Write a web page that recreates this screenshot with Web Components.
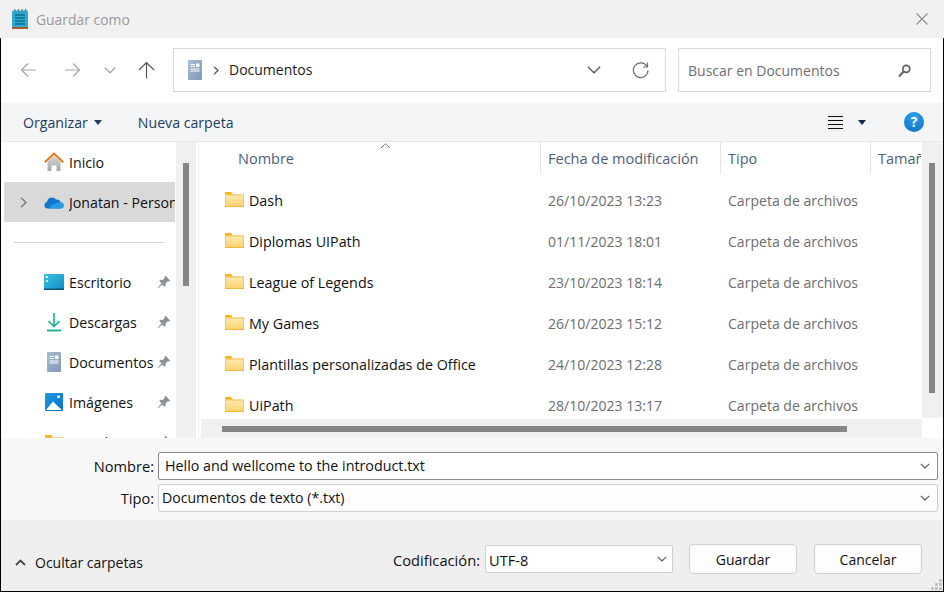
<!DOCTYPE html>
<html lang="es">
<head>
<meta charset="utf-8">
<title>Guardar como</title>
<style>
  html, body { margin: 0; height: 100%; background: #f0f0f0; }
  body { font: 14px/20px "Open Sans", "Noto Sans", sans-serif; color: #111; overflow: hidden; }
</style>
</head>
<body>
<fd-dialog>
  <fd-titlebar slot="title">Guardar como</fd-titlebar>
  <fd-navbar slot="nav"></fd-navbar>
  <fd-toolbar slot="tools"></fd-toolbar>
  <fd-sidebar slot="side">
    <fd-side-item icon="home" label="Inicio"></fd-side-item>
    <fd-side-item icon="cloud" label="Jonatan - Personal" selected></fd-side-item>
    <fd-side-sep></fd-side-sep>
    <fd-side-item icon="desktop" label="Escritorio" pinned></fd-side-item>
    <fd-side-item icon="download" label="Descargas" pinned></fd-side-item>
    <fd-side-item icon="doc" label="Documentos" pinned></fd-side-item>
    <fd-side-item icon="image" label="Imágenes" pinned></fd-side-item>
    <fd-side-item icon="folder" label="UiPath" pinned></fd-side-item>
  </fd-sidebar>
  <fd-filelist slot="files">
    <fd-file name="Dash" date="26/10/2023 13:23"></fd-file>
    <fd-file name="Diplomas UIPath" date="01/11/2023 18:01"></fd-file>
    <fd-file name="League of Legends" date="23/10/2023 18:14"></fd-file>
    <fd-file name="My Games" date="26/10/2023 15:12"></fd-file>
    <fd-file name="Plantillas personalizadas de Office" date="24/10/2023 12:28"></fd-file>
    <fd-file name="UiPath" date="28/10/2023 13:17"></fd-file>
  </fd-filelist>
  <fd-saveform slot="form"></fd-saveform>
  <fd-footer slot="footer"></fd-footer>
</fd-dialog>

<script>
const ICONS = {
  notepad: `<svg width="16" height="20" viewBox="0 0 16 20"><rect y="1.500" width="16" height="17" rx="1" fill="#2fa9cf"/><rect y="18" width="16" height="2" fill="#a8592a"/><path d="M3 0v3M6.500 0v3M10 0v3M13.500 0v3" stroke="#5f7f8c" stroke-width="1.200"/><path d="M3 6h10M3 9h10M3 12h10M3 15h10" stroke="#0d6e8e" stroke-width="1.300"/></svg>`,
  home: `<svg width="20" height="20" viewBox="0 0 20 20"><defs><linearGradient id="h" x1="0" y1="0" x2="0" y2="1"><stop offset="0" stop-color="#d8d8d8"/><stop offset="1" stop-color="#a6a6a6"/></linearGradient></defs><path d="M3.500 9.500L10 3.500l6.500 6V19H12.500v-5.500h-5V19H3.500z" fill="url(#h)"/><path d="M0.800 10.200L10 1.600l9.200 8.600" fill="none" stroke="#e8740c" stroke-width="1.900"/></svg>`,
  cloud: `<svg width="20" height="14" viewBox="0 0 20 14"><path d="M3.400 13.500A3.300 3.300 0 0 1 3 7a5 5 0 0 1 9-2.400A4 4 0 0 1 16.600 7.500 3 3 0 0 1 16.500 13.500z" fill="#1276cf"/><path d="M5 13.500H16.700a3 3 0 0 0 .1-6c-2.500-.6-4.500.2-5.600 2-2-.7-4.800.5-6.200 4z" fill="#2b9be6"/></svg>`,
  desktop: `<svg width="20" height="16" viewBox="0 0 20 16"><defs><linearGradient id="d" x1="0" y1="0" x2="1" y2="1"><stop offset="0" stop-color="#3cc4dc"/><stop offset="1" stop-color="#0f8cc8"/></linearGradient></defs><rect y="0" width="20" height="15.500" rx=".8" fill="url(#d)"/><rect y="14.500" width="20" height="1.500" fill="#0d5a78"/><rect x="2" y="2" width="2" height="2" fill="#fff"/><rect x="2" y="6" width="2" height="2" fill="#dff"/></svg>`,
  download: `<svg width="14" height="20" viewBox="0 0 14 20"><path d="M7 1v13.500M1.500 9L7 14.500 12.500 9" fill="none" stroke="#1fb598" stroke-width="1.700"/><path d="M0 18.500h14" stroke="#1fb598" stroke-width="1.800"/></svg>`,
  doc: `<svg width="14" height="20" viewBox="0 0 14 20"><defs><linearGradient id="dc" x1="0" y1="0" x2="1" y2="1"><stop offset="0" stop-color="#a8bcd4"/><stop offset="1" stop-color="#7e98b6"/></linearGradient></defs><rect width="14" height="20" rx="1" fill="url(#dc)"/><path d="M2.500 4.500h4.500M2.500 6.500h4.500M2.500 9h9M2.500 11h9" stroke="#fff" stroke-width="1"/><rect x="8" y="3.500" width="3.500" height="3.500" fill="#fff"/></svg>`,
  image: `<svg width="18" height="18" viewBox="0 0 18 18"><defs><linearGradient id="i" x1="0" y1="0" x2="1" y2="1"><stop offset="0" stop-color="#1b9be3"/><stop offset="1" stop-color="#0a70c8"/></linearGradient></defs><rect width="18" height="18" rx="1" fill="url(#i)"/><circle cx="13.500" cy="3.800" r="1.500" fill="#fff"/><path d="M1 17L8 8.500 11 11.500 17 17z" fill="#fff"/></svg>`,
  folder: `<svg width="19" height="15" viewBox="0 0 19 15"><defs><linearGradient id="f" x1="0" y1="0" x2="0" y2="1"><stop offset="0" stop-color="#ffeab0"/><stop offset="1" stop-color="#fdd26e"/></linearGradient></defs><path d="M0 1a1 1 0 0 1 1-1h5l2 2.500H0z" fill="#f7b216"/><rect y="2.500" width="19" height="12.500" rx=".6" fill="#f2b02e"/><rect x=".6" y="3.400" width="17.800" height="10.800" fill="url(#f)"/></svg>`,
  pin: `<svg width="14" height="14" viewBox="0 0 14 14"><path d="M8.500 .8l4.700 4.700-1.400 1-1-.3-2.300 2.300.1 2.200-1.200 1.100-2.300-2.400L1.500 13 .9 12.400 4.500 8.200 2.200 5.900 3.300 4.800l2.200.1 2.300-2.300-.3-1z" fill="#8b9298"/></svg>`
};

function define(tag, css, html) {
  customElements.define(tag, class extends HTMLElement {
    constructor() {
      super();
      this.attachShadow({ mode: 'open' });
    }
    connectedCallback() {
      const body = typeof html === 'function' ? html(this) : html;
      this.shadowRoot.innerHTML = `<style>${css}</style>${body}`;
    }
  });
}

const chevron = (w, h, color) => `<svg width="${w}" height="${h}" viewBox="0 0 ${w} ${h}"><path d="M.8 .8L${w / 2} ${h - 1}L${w - .8} .8" fill="none" stroke="${color}" stroke-width="1.100"/></svg>`;

define('fd-dialog', `
  :host { display: flex; flex-direction: column; width: 944px; height: 592px; box-sizing: border-box; }
  .frame { flex: 1; min-height: 0; display: flex; flex-direction: column; border: solid #000; border-width: 0 1px 1px 1px; }
  .body { height: 296px; display: flex; background: #fff; overflow: hidden; }
`, `
  <slot name="title"></slot>
  <div class="frame">
    <slot name="nav"></slot>
    <slot name="tools"></slot>
    <div class="body"><slot name="side"></slot><slot name="files"></slot></div>
    <slot name="form"></slot>
    <slot name="footer"></slot>
  </div>
`);

define('fd-titlebar', `
  :host { display: flex; align-items: center; height: 38px; background: #f1f1f1; color: #999; padding: 0 16px 0 12px; font-size: 13.9px; }
  .ico { width: 16px; height: 20px; margin-right: 8px; }
  .text { flex: 1; padding-top: 1px; }
  svg { display: block; }
`, `
  <div class="ico">${ICONS.notepad}</div><div class="text"><slot></slot></div>
  <svg width="12" height="12" viewBox="0 0 12 12"><path d="M.5 .5l11 11M11.500 .5L.5 11.500" stroke="#8e8e8e" stroke-width="1.100"/></svg>
`);

define('fd-navbar', `
  :host { display: flex; align-items: center; height: 65px; box-sizing: border-box; padding: 0 11px 1px 0; background: #fff; }
  .arrows { width: 172px; display: flex; align-items: center; flex: none; }
  .arrows svg { display: block; flex: none; }
  .box { height: 44px; box-sizing: border-box; border: 1px solid #d9d9d9; display: flex; align-items: center; }
  .addr { width: 493px; padding: 0 16px 0 14px; }
  .addr .doc { width: 14px; height: 20px; margin-right: 11px; }
  .addr .doc svg, .addr svg { display: block; }
  .addr .sep { margin-right: 10px; }
  .addr .where { flex: 1; color: #1a1a1a; }
  .addr .drop { margin-right: 31px; }
  .search { width: 253px; margin-left: 12px; padding: 1px 19px 0 9px; color: #6f6f6f; justify-content: space-between; }
`, `
  <div class="arrows">
    <svg style="margin-left:19px" width="17" height="16" viewBox="0 0 17 16"><path d="M16 8H1.500M8 1.500L1.500 8 8 14.500" fill="none" stroke="#a3a3a3" stroke-width="1.200"/></svg>
    <svg style="margin-left:27px" width="17" height="16" viewBox="0 0 17 16"><path d="M1 8h14.500M9 1.500L15.500 8 9 14.500" fill="none" stroke="#a3a3a3" stroke-width="1.200"/></svg>
    <svg style="margin-left:23px" width="12" height="7" viewBox="0 0 12 7"><path d="M.8 .8L6 5.800 11.200 .8" fill="none" stroke="#a3a3a3" stroke-width="1.200"/></svg>
    <svg style="margin-left:22px" width="17" height="18" viewBox="0 0 17 18"><path d="M8.500 17.500V1.500M1 9L8.500 1.500 16 9" fill="none" stroke="#555" stroke-width="1.200"/></svg>
  </div>
  <div class="box addr">
    <div class="doc">${ICONS.doc}</div>
    <svg class="sep" width="6" height="9" viewBox="0 0 6 9"><path d="M1 .8L5 4.500 1 8.200" fill="none" stroke="#555" stroke-width="1.200"/></svg>
    <span class="where">Documentos</span>
    <svg class="drop" width="14" height="8" viewBox="0 0 14 8"><path d="M.8 .8L7 6.800 13.200 .8" fill="none" stroke="#555" stroke-width="1.200"/></svg>
    <svg width="17" height="17" viewBox="0 0 17 17"><path d="M14.800 4.200A7.300 7.300 0 1 0 16 8.500" fill="none" stroke="#6d6d6d" stroke-width="1.200"/><path d="M15.500 .5v4.500H11" fill="none" stroke="#6d6d6d" stroke-width="1.200"/></svg>
  </div>
  <div class="box search">
    <span>Buscar en Documentos</span>
    <svg width="13" height="14" viewBox="0 0 13 14"><circle cx="8.300" cy="4.800" r="3.500" fill="none" stroke="#5f5f5f" stroke-width="1.700"/><path d="M5.800 7.400L1 12.500" stroke="#5f5f5f" stroke-width="2"/></svg>
  </div>
`);

define('fd-toolbar', `
  :host { display: flex; align-items: center; height: 39px; box-sizing: border-box; background: #f3f5f7; border-bottom: 1px solid #e6e6e6; color: #1e3a5f; padding: 1px 19px 0 22px; font-size: 14.15px; }
  .tri { width: 0; height: 0; border: 4px solid transparent; border-top: 5px solid #1e3a5f; border-bottom: 0; display: inline-block; }
  .org { display: flex; align-items: center; gap: 6px; }
  .new { margin-left: 36px; flex: 1; }
  .view { width: 19px; height: 19px; background: #f0f1f2; display: flex; align-items: center; justify-content: center; margin-top: -1px; }
  .view svg, .help { display: block; }
  .view-tri { margin: 0 38px 0 13px; border-top-color: #16294a; }
  .help { width: 20px; height: 20px; border-radius: 50%; background: radial-gradient(circle at 50% 25%, #2aa0ea, #0a6fc4); color: #fff; text-align: center; font: 700 14px/20px "Open Sans", sans-serif; margin-top: -1px; }
`, `
  <div class="org">Organizar <span class="tri"></span></div>
  <div class="new">Nueva carpeta</div>
  <div class="view"><svg width="15" height="13" viewBox="0 0 15 13"><path d="M0 .5h15M0 4.500h15M0 8.500h15M0 12.500h15" stroke="#111" stroke-width="1"/></svg></div>
  <span class="tri view-tri"></span>
  <div class="help">?</div>
`);

define('fd-sidebar', `
  :host { display: flex; flex: none; width: 195px; height: 296px; background: #fff; overflow: hidden; }
  .list { width: 175px; flex: none; padding: 0 1px 0 3px; box-sizing: border-box; overflow: hidden; }
  .track { width: 20px; flex: none; background: #f0f0f0; padding: 21px 7px 0; box-sizing: border-box; }
  .thumb { width: 6px; height: 123px; background: #868686; }
`, `
  <div class="list"><slot></slot></div>
  <div class="track"><div class="thumb"></div></div>
`);

define('fd-side-item', `
  :host { display: flex; align-items: center; height: 40px; color: #111; white-space: nowrap; overflow: hidden; position: relative; border-radius: 2px 0 0 2px; font-size: 14.2px; }
  :host([selected]) { background: #d9d9d9; }
  .exp { width: 40px; flex: none; display: flex; justify-content: center; padding-right: 2px; box-sizing: border-box; }
  .ico { width: 20px; flex: none; display: flex; justify-content: center; margin-right: 5px; }
  svg { display: block; }
  .label { flex: 1; overflow: hidden; padding-top: 1px; }
  .pin { position: absolute; right: 4px; top: 13px; }
`, (el) => `
  <div class="exp">${el.hasAttribute('selected') ? '<svg width="7" height="11" viewBox="0 0 7 11"><path d="M1 .8L6 5.500 1 10.200" fill="none" stroke="#777" stroke-width="1.300"/></svg>' : ''}</div>
  <div class="ico">${ICONS[el.getAttribute('icon')]}</div>
  <div class="label">${el.getAttribute('label')}</div>
  ${el.hasAttribute('pinned') ? `<div class="pin">${ICONS.pin}</div>` : ''}
`);

define('fd-side-sep', `
  :host { display: flex; align-items: center; height: 40px; padding: 0 10px; }
  div { flex: 1; height: 1px; background: #d6d6d6; }
`, `<div></div>`);

define('fd-filelist', `
  :host { display: flex; flex: 1; min-width: 0; height: 296px; background: #fff; }
  .main { flex: 1; min-width: 0; display: flex; flex-direction: column; overflow: hidden; background: linear-gradient(#f2f2f2, #f2f2f2) 2px 0 / 1px 100% no-repeat; }
  .head { height: 32px; display: grid; grid-template-columns: 345px 180px 150px 1fr; color: #4c607a; flex: none; padding-right: 1px; font-size: 14.5px; }
  .head div { position: relative; padding: 7px 0 0 7px; border-right: 1px solid #e4e4e4; overflow: hidden; white-space: nowrap; }
  .head div:first-child { padding-left: 42px; }
  .head div:last-child { border-right: 0; }
  .sort { position: absolute; left: 184px; top: 1px; }
  .rows { flex: 1; min-height: 0; padding-top: 6px; overflow: hidden; }
  .hbar { flex: none; height: 19px; margin-left: 5px; background: #f0f0f0; padding: 7px 0 0 21px; box-sizing: border-box; }
  .hbar div { width: 625px; height: 6px; background: #868686; }
  .vcol { width: 21px; flex: none; display: flex; flex-direction: column; }
  .vbar { flex: 1; background: #f0f0f0; padding: 21px 7px 0; box-sizing: border-box; }
  .vbar div { width: 6px; height: 230px; background: #868686; }
  .corner { height: 20px; background: #fff; }
`, `
  <div class="main">
    <div class="head">
      <div>Nombre<svg class="sort" width="11" height="6" viewBox="0 0 11 6"><path d="M.8 5L5.500 .8 10.200 5" fill="none" stroke="#777" stroke-width="1"/></svg></div>
      <div>Fecha de modificación</div>
      <div>Tipo</div>
      <div>Tamaño</div>
    </div>
    <div class="rows"><slot></slot></div>
    <div class="hbar"><div></div></div>
  </div>
  <div class="vcol"><div class="vbar"><div></div></div><div class="corner"></div></div>
`);

define('fd-file', `
  :host { display: grid; grid-template-columns: 344px 180px 1fr; height: 41px; align-items: center; color: #6d6d6d; white-space: nowrap; }
  .name { display: flex; align-items: center; gap: 5px; padding-left: 29px; color: #111; font-size: 14.3px; }
  svg { display: block; margin-bottom: 2px; }
  .cell { padding-left: 8px; font-size: 14.05px; }
`, (el) => `
  <div class="name">${ICONS.folder}<span>${el.getAttribute('name')}</span></div>
  <div class="cell">${el.getAttribute('date')}</div>
  <div class="cell">Carpeta de archivos</div>
`);

define('fd-saveform', `
  :host { display: grid; grid-template-columns: 156px 1fr; grid-auto-rows: 28px; row-gap: 4px; align-items: center; height: 82px; box-sizing: border-box; padding: 14px 5px 0 0; background: #f7f7f7; }
  label { text-align: right; padding-right: 3px; color: #111; font-size: 14.6px; }
  .f { height: 28px; box-sizing: border-box; margin-left: 1px; display: flex; align-items: center; justify-content: space-between; padding: 0 7px 0 6px; background: #fff; border: 1px solid #8a8a8a; border-radius: 2px; font-size: 14.3px; }
  .t { background: #fdfdfd; border-color: #cfcfcf; padding-left: 3px; font-size: 14.1px; }
  svg { display: block; }
`, `
  <label>Nombre:</label><div class="f"><span>Hello and wellcome to the introduct.txt</span>${chevron(10, 6, '#555')}</div>
  <label>Tipo:</label><div class="f t"><span>Documentos de texto (*.txt)</span>${chevron(10, 6, '#555')}</div>
`);

define('fd-footer', `
  :host { display: flex; align-items: center; flex: 1; background: #efefef; padding: 7px 21px 0 14px; position: relative; }
  .hide { display: flex; align-items: center; gap: 9px; margin-right: auto; padding-top: 7px; }
  svg { display: block; }
  .lbl { margin-right: 5px; font-size: 14.7px; padding-top: 1px; }
  .sel { width: 188px; height: 28px; box-sizing: border-box; display: flex; align-items: center; justify-content: space-between; padding: 0 5px 0 3px; background: #fff; border: 1px solid #cfcfcf; border-radius: 2px; margin-right: 16px; }
  .sel span { font-size: 14.6px; padding-top: 1px; }
  button { width: 108px; height: 30px; box-sizing: border-box; font: inherit; color: #111; background: #fdfdfd; border: 1px solid #cfcfcf; border-radius: 4px; padding: 1px 0 0; }
  button + button { margin-left: 17px; }
  .grip { position: absolute; right: 1px; bottom: 1px; }
`, `
  <div class="hide"><svg width="11" height="7" viewBox="0 0 11 7"><path d="M1 6L5.500 1.500 10 6" fill="none" stroke="#444" stroke-width="1.800"/></svg>Ocultar carpetas</div>
  <span class="lbl">Codificación:</span>
  <div class="sel"><span>UTF-8</span>${chevron(10, 6, '#555')}</div>
  <button>Guardar</button><button>Cancelar</button>
  <svg class="grip" width="11" height="11" viewBox="0 0 11 11"><path d="M8 0h3v3H8zM4 4h3v3H4zM8 4h3v3H8zM0 8h3v3H0zM4 8h3v3H4zM8 8h3v3H8z" fill="#c4c4c4"/></svg>
`);
</script>
</body>
</html>
